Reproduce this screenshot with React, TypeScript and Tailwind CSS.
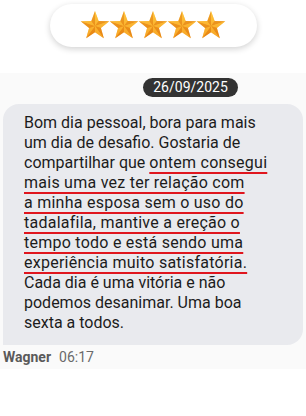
import React from "react";

function Star() {
  const cx = 16, cy = 16, R = 15, r = 6.2;
  const pts: [number, number][] = [];
  for (let i = 0; i < 10; i++) {
    const a = (-90 + i * 36) * (Math.PI / 180);
    const rad = i % 2 === 0 ? R : r;
    pts.push([cx + rad * Math.cos(a), cy + rad * Math.sin(a)]);
  }
  const tris = [];
  for (let i = 0; i < 10; i++) {
    const p1 = pts[i];
    const p2 = pts[(i + 1) % 10];
    tris.push(
      <polygon
        key={i}
        points={`${cx},${cy} ${p1[0]},${p1[1]} ${p2[0]},${p2[1]}`}
        fill={i % 2 === 0 ? "#ffc23a" : "#e07c10"}
      />
    );
  }
  return (
    <svg width="32" height="32" viewBox="0 0 32 32">
      <defs>
        <linearGradient id="sg" x1="0" y1="0" x2="0" y2="1">
          <stop offset="0" stopColor="#ffc840" />
          <stop offset="1" stopColor="#ef8a12" />
        </linearGradient>
      </defs>
      <polygon points={pts.map((p) => p.join(",")).join(" ")} fill="url(#sg)" />
      <g opacity="0.5">{tris}</g>
    </svg>
  );
}

const U = ({ children }: { children: React.ReactNode }) => (
  <span className="underline decoration-[#e0161e] decoration-[1.5px] underline-offset-[4px] tracking-[0.25px] pr-[1px]">{children}</span>
);

export default function App() {
  return (
    <div className="w-[306px] h-[416px] bg-white overflow-hidden" style={{ fontFamily: "Roboto, 'Noto Sans', sans-serif" }}>
      <div className="h-[73px] flex justify-center pt-[4px]">
        <div className="w-[207px] h-[43px] rounded-full bg-white shadow-[0_2px_6px_rgba(0,0,0,0.18)] flex items-center justify-center">
          <div className="flex items-center -space-x-[3px]">
            <Star />
            <Star />
            <Star />
            <Star />
            <Star />
          </div>
        </div>
      </div>
      <div className="bg-[#fafafa] pt-[5px] pb-[3px]">
        <div className="ml-[143px] w-[95px] h-[19px] rounded-full bg-[#333333] text-white text-[14px] leading-[19px] text-center">
          26/09/2025
        </div>
        <div className="mt-[7px] mx-[3px] rounded-[16px] rounded-bl-none bg-[#e9eaee] pl-[21px] pt-[9px] pb-[12px] text-[16px] leading-[20px] text-[#1c1c1c]">
          <div>Bom dia pessoal, bora para mais</div>
          <div>um dia de desafio. Gostaria de</div>
          <div>compartilhar que <U>ontem consegui</U></div>
          <div><U>mais uma vez ter relação com</U></div>
          <div><U>a minha esposa sem o uso do</U></div>
          <div><U>tadalafila, mantive a ereção o</U></div>
          <div><U>tempo todo e está sendo uma</U></div>
          <div><U>experiência muito satisfatória.</U></div>
          <div>Cada dia é uma vitória e não</div>
          <div>podemos desanimar. Uma boa</div>
          <div>sexta a todos.</div>
        </div>
        <div className="flex items-baseline mt-[4px] pl-[3px] text-[14px] leading-[17px]">
          <span className="font-bold text-[#5a5a5a]">Wagner</span>
          <span className="ml-[8px] text-[#6a6a6a]">06:17</span>
        </div>
      </div>
    </div>
  );
}
